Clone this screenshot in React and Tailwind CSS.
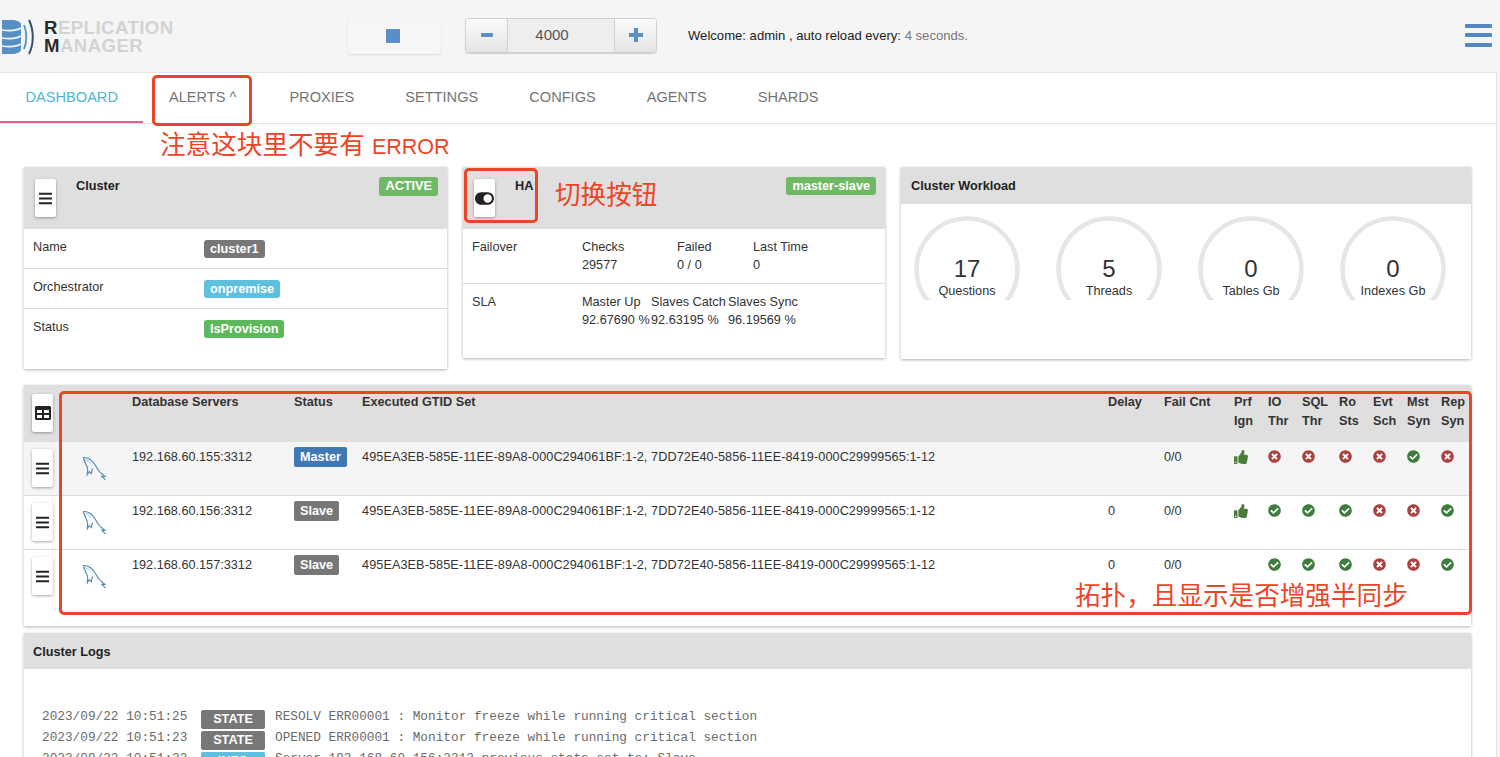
import { FaBars, FaCheckCircle, FaTable, FaThumbsUp, FaTimesCircle, FaToggleOn } from "react-icons/fa";

const sans = { fontFamily: '"Liberation Sans", Arial, sans-serif' };

const tabs = ["DASHBOARD", "ALERTS ^", "PROXIES", "SETTINGS", "CONFIGS", "AGENTS", "SHARDS"];
const tabClasses = [
  "h-[50px] pt-[14px] px-[25.500px] text-[#4eb5d3] border-b-2 border-[#ec5b8c]",
  "h-[50px] pt-[14px] pl-[25.500px] pr-[27.500px] text-[#757575]",
  "h-[50px] pt-[14px] px-[25.500px] text-[#757575]",
];
const gridCols = "grid grid-cols-[108px_162px_68px_746px_56px_70px_34px_34px_37px_34px_34px_34px_30px]";
const gtid = "495EA3EB-585E-11EE-89A8-000C294061BF:1-2, 7DD72E40-5856-11EE-8419-000C29999565:1-12";

const servers = [
  { host: "192.168.60.155:3312", role: "Master", delay: "", thumb: true, flags: [0, 0, 0, 0, 1, 0], bg: "bg-[#f5f5f5]", h: "h-[54px]" },
  { host: "192.168.60.156:3312", role: "Slave", delay: "0", thumb: true, flags: [1, 1, 1, 0, 0, 1], bg: "bg-white", h: "h-[54px]" },
  { host: "192.168.60.157:3312", role: "Slave", delay: "0", thumb: false, flags: [1, 1, 1, 0, 0, 1], bg: "bg-white", h: "h-[76px]" },
];

const gauges = [
  ["17", "Questions"],
  ["5", "Threads"],
  ["0", "Tables Gb"],
  ["0", "Indexes Gb"],
];

const logs = [
  ["2023/09/22 10:51:25", "STATE", "RESOLV ERR00001 : Monitor freeze while running critical section"],
  ["2023/09/22 10:51:23", "STATE", "OPENED ERR00001 : Monitor freeze while running critical section"],
  ["2023/09/22 10:51:23", "INFO", "Server 192.168.60.156:3312 previous state set to: Slave"],
];

function Logo() {
  return (
    <div className="flex items-center w-[348px] pl-[2px]">
      <svg width="36" height="36" viewBox="0 0 36 36" fill="none">
        <path d="M0 1h9c6 0 10 2 10 4.500v25c0 2.500-4 4.500-10 4.500H0z" fill="#5a8fc5" />
        <path d="M0 11c7 1 14 1 19-2M0 19c7 1 14 1 19-2M0 27c7 1 14 1 19-2" stroke="#f5f5f5" strokeWidth="1.600" />
        <path d="M22 6c3 7 3 17 0 24" stroke="#5a8fc5" strokeWidth="1.800" />
        <path d="M27 1c5 10 5 24 0 34" stroke="#34506d" strokeWidth="2" />
      </svg>
      <div className="ml-[6px] text-[18.6px] leading-[18px] font-bold tracking-[0.45px] text-[#d3d3d3]" style={sans}>
        <div><span className="text-[#2b2b2b]">R</span>EPLICATION</div>
        <div><span className="text-[#2b2b2b]">M</span>ANAGER</div>
      </div>
    </div>
  );
}

function TopBar() {
  return (
    <div className="h-[72px] flex items-center shrink-0 text-[#333]" style={sans}>
      <div className="w-[348px] mt-[2px]"><Logo /></div>
      <div className="w-[93px] h-[36px] pr-[3px] flex items-center justify-center rounded-[3px] bg-[#f6f6f6] shadow-[0_1px_2px_rgba(0,0,0,0.12)]">
        <div className="w-[14px] h-[14px] rounded-[1px] bg-[#5a8fc5]" />
      </div>
      <div className="ml-[24px] -mt-[2px] w-[192px] h-[35px] flex rounded-[4px] border border-[#cfcfcf] shadow-[0_1px_1px_rgba(0,0,0,0.15)] overflow-hidden">
        <div className="w-[42px] flex items-center justify-center bg-gradient-to-b from-[#fbfbfb] to-[#e4e4e4] border-r border-[#d0d0d0]">
          <div className="w-[12px] h-[4px] bg-[#5a8fc5] rounded-[1px]" />
        </div>
        <div className="flex-1 pr-[18px] flex items-center justify-center bg-[#eeeeee] text-[#555] text-[15px]">4000</div>
        <div className="w-[42px] flex items-center justify-center bg-gradient-to-b from-[#fbfbfb] to-[#e4e4e4] border-l border-[#d0d0d0]">
          <div className="relative w-[14px] h-[14px]">
            <div className="absolute left-0 top-[5px] w-[14px] h-[4px] bg-[#5a8fc5]" />
            <div className="absolute left-[5px] top-0 w-[4px] h-[14px] bg-[#5a8fc5]" />
          </div>
        </div>
      </div>
      <div className="ml-[31px] text-[13.1px] text-[#222]">
        Welcome: admin , auto reload every: <span className="text-[#777]">4 seconds.</span>
      </div>
      <div className="ml-auto mr-[8px] w-[27px] flex flex-col gap-[5.500px] -mt-[2px]">
        <div className="h-[4px] bg-[#4f88c2] rounded-[1px]" />
        <div className="h-[4px] bg-[#4f88c2] rounded-[1px]" />
        <div className="h-[4px] bg-[#4f88c2] rounded-[1px]" />
      </div>
    </div>
  );
}

function Tabs() {
  return (
    <div className="flex h-[51px] border-b border-[#e4e4e4] text-[14.6px]" style={sans}>
      {tabs.map((t, i) => (
        <div key={t} className={tabClasses[Math.min(i, 2)]}>
          {t}
        </div>
      ))}
    </div>
  );
}

function IconButton({ children }) {
  return (
    <div className="w-[21px] h-[38px] flex items-center justify-center rounded-[2px] bg-white text-[#222] shadow-[0_1px_3px_rgba(0,0,0,0.35)]">
      {children}
    </div>
  );
}

function Label({ color, children }) {
  return <span className={"inline-block px-[6px] h-[18px] leading-[18px] rounded-[3px] text-white font-bold text-[12.7px] " + color}>{children}</span>;
}

function Card({ className, children }) {
  return <div className={"bg-white shadow-[0_1px_3px_rgba(0,0,0,0.3)] " + className}>{children}</div>;
}

function ClusterCard() {
  const rows = [
    ["Name", "cluster1", "bg-[#777]"],
    ["Orchestrator", "onpremise", "bg-[#5fbfde]"],
    ["Status", "IsProvision", "bg-[#5cb85c]"],
  ];
  return (
    <Card className="w-[423px] h-[202px]">
      <div className="h-[62px] bg-[#dfdfdf] flex pl-[11px] pt-[12px] pr-[9px]">
        <IconButton><FaBars size={15} /></IconButton>
        <div className="ml-[20px] -mt-[2px] font-bold text-[#222]">Cluster</div>
        <div className="ml-auto -mt-[2px]"><Label color="bg-[#6fb964] h-[19px]">ACTIVE</Label></div>
      </div>
      {rows.map(([k, v, c], i) => (
        <div key={k} className={"flex h-[40px] pt-[9px] pl-[9px] text-[#333] " + (i < 2 ? "border-b border-[#ddd]" : "")}>
          <div className="w-[171px]">{k}</div>
          <div className="mt-[2px]"><Label color={c}>{v}</Label></div>
        </div>
      ))}
    </Card>
  );
}

function HaCard() {
  return (
    <Card className="w-[422px] h-[191px]">
      <div className="h-[62px] bg-[#dfdfdf] flex pl-[11px] pt-[12px] pr-[9px]">
        <IconButton><FaToggleOn size={19} /></IconButton>
        <div className="ml-[20px] -mt-[2px] font-bold text-[#222]">HA</div>
        <div className="ml-auto -mt-[2px]"><Label color="bg-[#6fb964]">master-slave</Label></div>
      </div>
      <div className="flex h-[55px] pt-[9px] pl-[9px] border-b border-[#ddd] text-[#333] leading-[18px]">
        <div className="w-[110px]">Failover</div>
        <div className="w-[95px]">Checks<br />29577</div>
        <div className="w-[76px]">Failed<br />0 / 0</div>
        <div>Last Time<br />0</div>
      </div>
      <div className="flex pt-[9px] pl-[9px] text-[#333] leading-[18px]">
        <div className="w-[110px]">SLA</div>
        <div className="w-[69px]">Master Up<br /><span className="whitespace-nowrap">92.67690 %</span></div>
        <div className="w-[77px] whitespace-nowrap">Slaves Catch<br />92.63195 %</div>
        <div className="whitespace-nowrap">Slaves Sync<br />96.19569 %</div>
      </div>
    </Card>
  );
}

function Gauge({ value, label }) {
  return (
    <div className="relative w-[106px] h-[84px] text-[#333]">
      <svg width="106" height="84" viewBox="0 0 106 84" fill="none">
        <path d="M17.600 89A50.500 50.500 0 1 1 88.400 89" stroke="#e6e6e6" strokeWidth="4.500" />
      </svg>
      <div className="absolute inset-x-0 top-[39px] text-center text-[24px] leading-[28px]">{value}</div>
      <div className="absolute inset-x-0 top-[67px] text-center text-[12.7px] leading-[16px]">{label}</div>
    </div>
  );
}

function WorkloadCard() {
  return (
    <Card className="w-[570px] h-[192px]">
      <div className="h-[37px] bg-[#dfdfdf] pl-[10px] pt-[11px] font-bold text-[#222] leading-[16px]">Cluster Workload</div>
      <div className="flex pl-[13px] pt-[12px] gap-[36px]">
        {gauges.map(([v, l]) => <Gauge key={l} value={v} label={l} />)}
      </div>
    </Card>
  );
}

function Dolphin() {
  return (
    <svg width="25" height="25" viewBox="0 0 24 24" fill="none" stroke="#4f8bb3" strokeWidth="1.100">
      <path d="M1 1.500C6 1 11 5 13.500 10 15 13 16 15 19 17L22 19.500 19 19.500 22.500 23" />
      <path d="M1.500 2C2 6 5 9 5.500 13 5.500 15 5 17 5 18L7 15 9 17 10 12" />
      <path d="M2 4C4 3 7 5 9 8" strokeWidth="0.500" />
    </svg>
  );
}

function ServersCard() {
  const head = (a, b) => <div>{a}{b && <br />}{b}</div>;
  return (
    <Card className="w-[1447px] h-[241px]">
      <div className={gridCols + " h-[57px] bg-[#dfdfdf] pt-[8px] font-bold text-[#333] leading-[19px]"}>
        <div className="pl-[8px] pt-[1px]"><IconButton><FaTable size={16} /></IconButton></div>
        <div>Database Servers</div>
        <div>Status</div>
        <div>Executed GTID Set</div>
        <div>Delay</div>
        <div>Fail Cnt</div>
        {head("Prf", "Ign")}
        {head("IO", "Thr")}
        {head("SQL", "Thr")}
        {head("Ro", "Sts")}
        {head("Evt", "Sch")}
        {head("Mst", "Syn")}
        {head("Rep", "Syn")}
      </div>
      {servers.map((s, i) => (
        <div key={s.host} className={gridCols + " text-[#333] leading-[16px] " + s.h + " " + s.bg + (i < 2 ? " border-b border-[#ddd]" : "")}>
          <div className="flex pl-[8px] pt-[7px]">
            <IconButton><FaBars size={15} /></IconButton>
            <div className="ml-[29px] mt-[7px]"><Dolphin /></div>
          </div>
          <div className="pt-[7px]">{s.host}</div>
          <div className="pt-[5px]">
            <span className={"inline-block h-[20px] leading-[20px] px-[6px] rounded-[2px] text-white font-bold " + (s.role === "Master" ? "bg-[#3f78b3]" : "bg-[#777]")}>{s.role}</span>
          </div>
          <div className="pt-[7px] whitespace-nowrap tracking-[0.07px]">{gtid}</div>
          <div className="pt-[7px]">{s.delay}</div>
          <div className="pt-[7px]">0/0</div>
          <div className="pt-[8px] text-[#4a7d3a]">{s.thumb && <FaThumbsUp size={14} />}</div>
          {s.flags.map((ok, j) => (
            <div key={j} className={"pt-[8px] " + (ok ? "text-[#3f7d3f]" : "text-[#a94442]")}>
              {ok ? <FaCheckCircle size={13} /> : <FaTimesCircle size={13} />}
            </div>
          ))}
        </div>
      ))}
    </Card>
  );
}

function LogsCard() {
  return (
    <Card className="w-[1447px] mt-[7px] h-[200px]">
      <div className="h-[36px] bg-[#dfdfdf] pl-[9px] pt-[11px] font-bold text-[#222] leading-[16px]">Cluster Logs</div>
      <div className="pt-[41px] pl-[18px] flex flex-col gap-[2px]">
        {logs.map(([t, k, m], i) => (
          <div key={i} className="flex h-[19px] text-[12.75px] text-[#6b6b6b] leading-[13px]" style={{ fontFamily: '"Liberation Mono", "Courier New", monospace' }}>
            <div className="w-[159px]">{t}</div>
            <div className={"w-[64px] h-[19px] rounded-[2px] text-center text-white font-bold text-[12.7px] leading-[19px] " + (k === "STATE" ? "bg-[#777]" : "bg-[#5fbfde]")} style={sans}>{k}</div>
            <div className="ml-[10px]">{m}</div>
          </div>
        ))}
      </div>
    </Card>
  );
}

function Annotations() {
  const note = "absolute text-[#ee4426] text-[25.6px] leading-[30px] whitespace-nowrap";
  const font = { fontFamily: '"Liberation Sans", "Noto Sans CJK SC", sans-serif' };
  return (
    <>
      <div className="absolute left-[152px] top-[75px] w-[100px] h-[51px] rounded-[5px] border-[3px] border-[#ee4426]" />
      <div className="absolute left-[464px] top-[168px] w-[74px] h-[55px] rounded-[5px] border-[3px] border-[#ee4426]" />
      <div className="absolute left-[59px] top-[391px] w-[1413px] h-[224px] rounded-[5px] border-[3px] border-[#ee4426]" />
      <div className={note + " left-[160px] top-[130px]"} style={font}>注意这块里不要有 <span className="text-[21.5px]">ERROR</span></div>
      <div className={note + " left-[555px] top-[180px]"} style={font}>切换按钮</div>
      <div className={note + " left-[1075px] top-[581px]"} style={font}>拓扑，且显示是否增强半同步</div>
    </>
  );
}

export default function App() {
  return (
    <div className="relative h-[757px] w-[1500px] overflow-hidden bg-[#f5f5f5] flex flex-col text-[12.7px]" style={sans}>
      <TopBar />
      <div className="flex-1 w-[1497px] bg-white border-t border-r border-[#e4e4e4]">
        <Tabs />
        <div className="pl-[24px] pt-[43px]">
          <div className="flex gap-[16px] items-start h-[218px]">
            <ClusterCard />
            <HaCard />
            <WorkloadCard />
          </div>
          <ServersCard />
          <LogsCard />
        </div>
      </div>
      <Annotations />
    </div>
  );
}
